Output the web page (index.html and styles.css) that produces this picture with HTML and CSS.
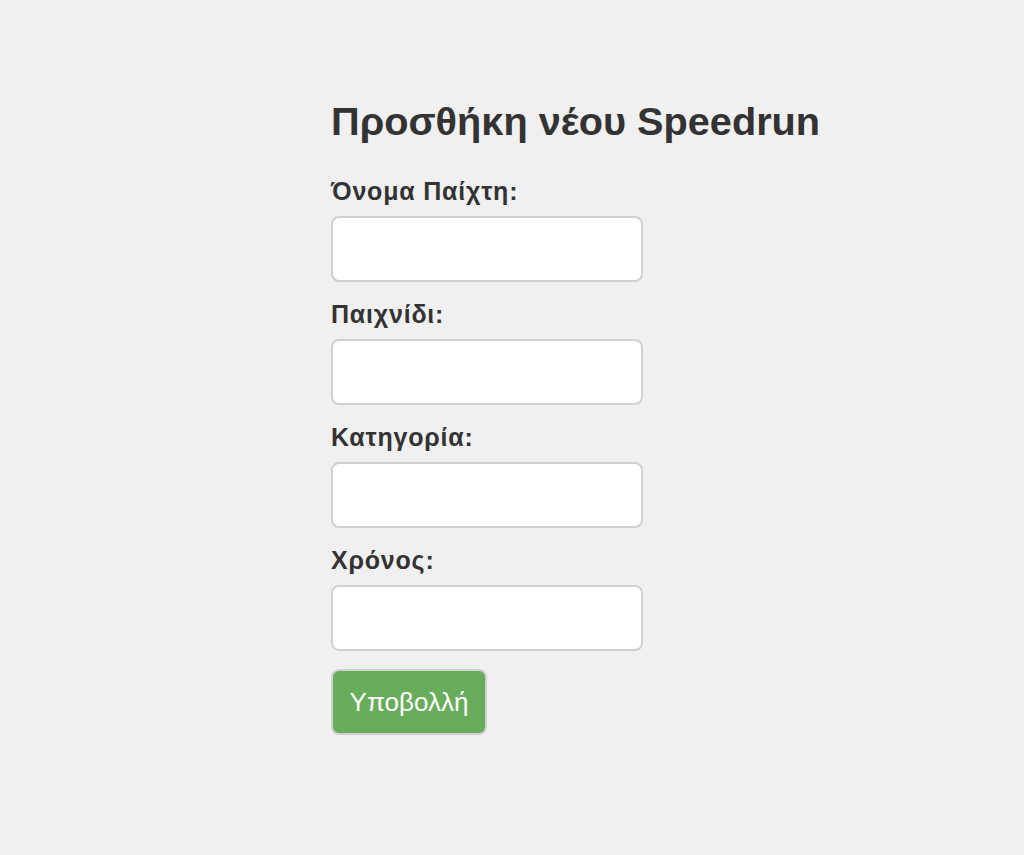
FILE: index.html
```html
<!DOCTYPE html>
<html lang="el">
<head>
    <meta charset="UTF-8">
    <meta name="viewport" content="width=device-width, initial-scale=1.0">
    <title>Προσθήκη νέου Speedrun</title>
    <link rel="stylesheet" href="styles.css">
</head>
<body>
    <div class="container">
        <h1>Προσθήκη νέου Speedrun</h1>
        <form class="run-form">
            <label for="player">Όνομα Παίχτη:</label>
            <input type="text" id="player" name="player">

            <label for="game">Παιχνίδι:</label>
            <input type="text" id="game" name="game">

            <label for="category">Κατηγορία:</label>
            <input type="text" id="category" name="category">

            <label for="time">Χρόνος:</label>
            <input type="text" id="time" name="time">

            <button type="submit" class="btn-submit">Υποβολλή</button>
        </form>
    </div>
</body>
</html>
```

FILE: styles.css
```css
* {
    margin: 0;
    padding: 0;
    box-sizing: border-box;
}

body {
    font-family: "Liberation Sans", Arial, Helvetica, sans-serif;
    background: #f0f0f0;
    color: #333;
    min-height: 100vh;
    padding-top: 95px;
}

.container {
    width: 362px;
    margin: 0 auto;
}

h1 {
    font-size: 39.7px;
    font-weight: 700;
    line-height: 52px;
    white-space: nowrap;
    margin-bottom: 30px;
}

.run-form {
    display: flex;
    flex-direction: column;
    align-items: flex-start;
}

label {
    font-size: 25px;
    font-weight: 700;
    line-height: 28px;
    letter-spacing: 0.8px;
    margin-bottom: 11px;
}

input {
    width: 312px;
    height: 66px;
    padding: 10px 14px;
    border: 2px solid #d0d0d0;
    border-radius: 8px;
    background: #fff;
    font-size: 22px;
    font-family: inherit;
    margin-bottom: 18px;
}

input:focus {
    outline: none;
    border-color: #66ad5c;
}

.btn-submit {
    width: 156px;
    height: 66px;
    background: #67ad5b;
    color: #fff;
    border: 2px solid #d0d0d0;
    border-radius: 8px;
    font-size: 26px;
    font-family: inherit;
    cursor: pointer;
}

.btn-submit:hover {
    background: #5a9e4f;
}
```
